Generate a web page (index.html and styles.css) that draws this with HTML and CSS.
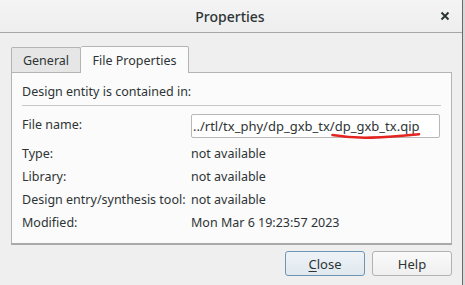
FILE: index.html
```html
<!DOCTYPE html>
<html>
<head>
<meta charset="utf-8">
<link rel="stylesheet" href="styles.css">
</head>
<body>
<div class="window">
  <div class="titlebar">
    <span class="title">Properties</span>
    <span class="close-x">
      <svg width="10" height="10" viewBox="0 0 10 10"><path d="M1.5 1.5 L8.5 8.5 M8.5 1.5 L1.5 8.5" stroke="#2e3436" stroke-width="2" stroke-linecap="butt"/></svg>
    </span>
  </div>
  <div class="body">
    <div class="tabs">
      <div class="tab">General</div>
      <div class="tab active">File Properties</div>
    </div>
    <div class="panel">
      <div class="heading">Design entity is contained in:</div>
      <div class="sep"></div>
      <div class="file-row">
        <span class="label">File name:</span>
        <div class="input">../rtl/tx_phy/dp_gxb_tx/dp_gxb_tx.qip
          <svg class="scribble" width="92" height="8" viewBox="0 0 92 8"><path d="M1.5 3 C 12 4.8, 25 6, 40 5.6 C 55 5.2, 70 4, 88 2.2" fill="none" stroke="#e3241f" stroke-width="2.6" stroke-linecap="round"/></svg>
        </div>
      </div>
      <div class="grid">
        <span class="label">Type:</span><span>not available</span>
        <span class="label">Library:</span><span>not available</span>
        <span class="label">Design entry/synthesis tool:</span><span>not available</span>
        <span class="label">Modified:</span><span>Mon Mar 6 19:23:57 2023</span>
      </div>
    </div>
    <div class="buttons">
      <button class="btn default"><u>C</u>lose</button>
      <button class="btn">Help</button>
    </div>
  </div>
</div>
</body>
</html>
```
FILE: styles.css
```css
html, body {
  margin: 0;
  padding: 0;
}
body {
  width: 465px;
  height: 285px;
  background: #d8d8d8;
  overflow: hidden;
  font-family: "Noto Sans", "Open Sans", sans-serif;
  font-size: 12.5px;
  color: #2e3436;
}
.window {
  width: 462px;
  height: 285px;
  background: #efefef;
  border-right: 1px solid #6a6a6a;
}
.titlebar {
  position: relative;
  height: 32px;
  background: linear-gradient(#f4f4f4, #eeeeee);
  border-bottom: 1px solid #a6a6a6;
  display: flex;
  align-items: center;
  justify-content: center;
}
.title {
  font-size: 14px;
  font-weight: 500;
  color: #2e3436;
  margin-left: -2px;
}
.close-x {
  position: absolute;
  right: 12px;
  top: 11px;
  display: flex;
}
.body {
  padding: 12px 10px 0 11px;
}
.tabs {
  display: flex;
  align-items: flex-end;
  height: 27px;
}
.tab {
  height: 25px;
  width: 70px;
  box-sizing: border-box;
  border: 1px solid #b4b4b4;
  border-bottom: none;
  border-radius: 2px 2px 0 0;
  background: #e6e6e6;
  display: flex;
  align-items: center;
  justify-content: center;
  padding-top: 1px;
}
.tab.active {
  height: 27px;
  width: 108px;
  background: #fbfbfb;
  border-left: none;
  margin-bottom: -1px;
  position: relative;
  padding-top: 0;
}
.panel {
  width: 441px;
  box-sizing: border-box;
  border: 1px solid #b4b4b4;
  border-bottom: 2px solid #a9a9a9;
  background: #fbfbfb;
  padding: 7px 10px 9px 10px;
}
.heading {
  height: 23px;
  line-height: 23px;
}
.sep {
  margin-top: 2px;
  height: 1px;
  background: #c8c8c8;
}
.file-row {
  margin-top: 8px;
  display: flex;
  align-items: center;
  height: 24px;
}
.file-row .label {
  width: 169px;
  flex: none;
  margin-top: -4px;
}
.input {
  position: relative;
  width: 249px;
  height: 24px;
  box-sizing: border-box;
  border: 1px solid #b8b8b8;
  border-radius: 2px;
  background: #ffffff;
  padding: 0 0 0 1px;
  line-height: 22px;
  font-size: 13px;
  white-space: nowrap;
}
.scribble {
  position: absolute;
  left: 139px;
  top: 17px;
}
.grid {
  margin-top: 4px;
  display: grid;
  grid-template-columns: 169px 1fr;
  grid-auto-rows: 23px;
  align-items: center;
}
.buttons {
  display: flex;
  justify-content: flex-end;
  gap: 7px;
  margin-top: 6px;
  width: 441px;
}
.btn {
  width: 80px;
  height: 25px;
  box-sizing: border-box;
  font-family: "Noto Sans", "Open Sans", sans-serif;
  font-size: 13px;
  color: #2e3436;
  border: 1px solid #b2b2b2;
  border-radius: 3px;
  background: linear-gradient(#fafafa, #efefef);
  padding: 0;
}
.btn.default {
  border-color: #6f95b5;
  background: linear-gradient(#eef3f7, #dfe8ef);
}
.btn u {
  text-decoration-thickness: 1px;
  text-underline-offset: 2px;
}
```
